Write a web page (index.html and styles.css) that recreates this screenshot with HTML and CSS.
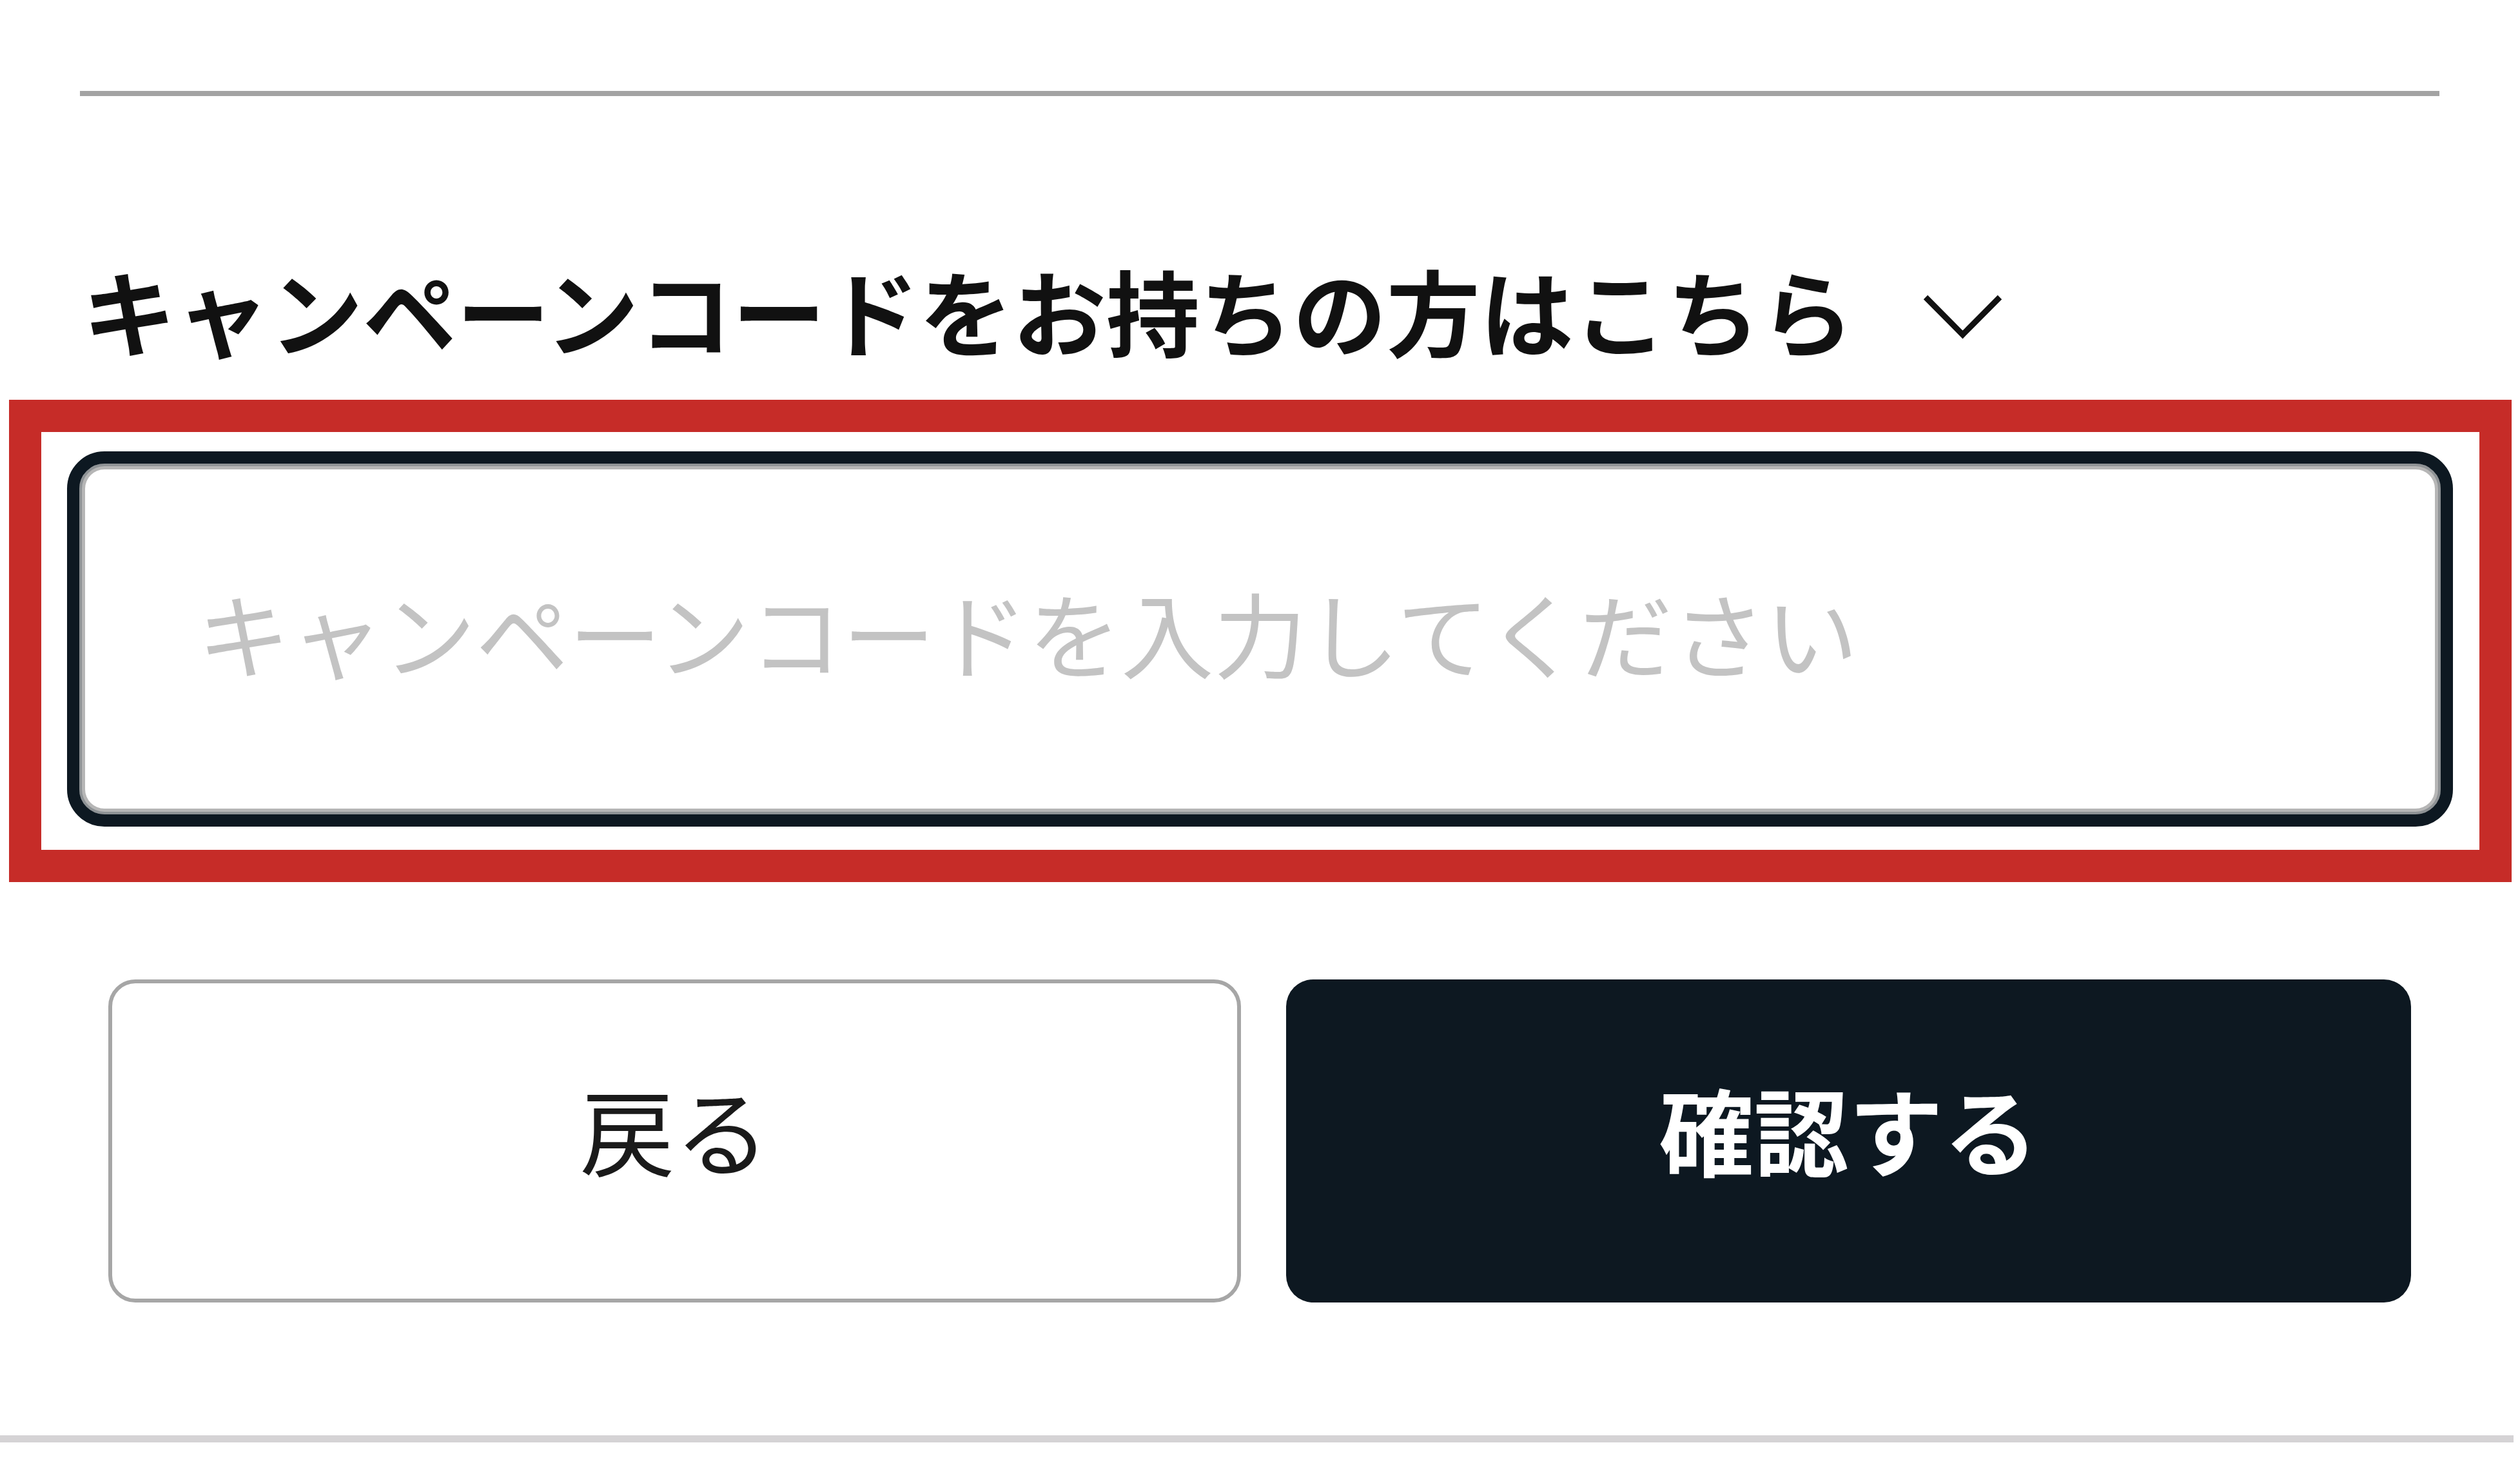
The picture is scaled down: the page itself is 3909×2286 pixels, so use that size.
FILE: index.html
```html
<!DOCTYPE html>
<html lang="ja">
  <head>
    <meta charset="UTF-8" />
    <meta name="viewport" content="width=device-width, initial-scale=1.0" />
    <title>キャンペーンコード</title>
    <link rel="stylesheet" href="styles.css">
  </head>

  <body>
    <div class="page">
      <div class="rule"></div>

      <button class="campaign-toggle" type="button">
        <span>キャンペーンコードをお持ちの方はこちら</span>
        <svg class="chevron" width="125" height="70" viewBox="0 0 125 70">
          <polyline points="5,5 62.5,63 120,5" />
        </svg>
      </button>

      <div class="code-box">
        <input
          class="code-input"
          type="text"
          name="campaignCode"
          placeholder="キャンペーンコードを入力してください"
        />
      </div>

      <div class="actions">
        <button class="btn btn-back" type="button">戻る</button>
        <button class="btn btn-confirm" type="submit">確認する</button>
      </div>

      <div class="rule rule-bottom"></div>
    </div>
  </body>
</html>
```

FILE: styles.css
```css
* {
  box-sizing: border-box;
}

body {
  margin: 0;
  background-color: #fff;
  color: #111;
  font-family: "Noto Sans CJK JP", "Noto Sans", sans-serif;
}

.page {
  padding-top: 141px;
}

.rule {
  height: 8px;
  margin: 0 125px 0 124px;
  background-color: #a3a3a3;
}

.campaign-toggle {
  display: flex;
  align-items: center;
  gap: 106px;
  margin: 231px 0 0 128px;
  padding: 0;
  border: none;
  background: none;
  color: #111;
  font-family: inherit;
  font-size: 145px;
  font-weight: 700;
  line-height: 200px;
  cursor: pointer;
}

.chevron {
  margin-top: 22px;
}

.chevron polyline {
  fill: none;
  stroke: #111;
  stroke-width: 9;
}

.code-box {
  width: 3882px;
  margin: 40px 0 0 14px;
  padding: 30px 41px 36px 40px;
  border: 50px solid #c62c28;
}

.code-input {
  display: block;
  width: 100%;
  height: 582px;
  padding: 0 0 24px 183px;
  border: 19px solid #0d1821;
  border-radius: 58px;
  box-shadow: inset 0 0 0 4px #8e9295, inset 0 0 0 9px #b6b6b6;
  background-color: #fff;
  color: #111;
  font-family: inherit;
  font-size: 144px;
  outline: none;
}

.code-input::placeholder {
  color: #c3c3c3;
}

.actions {
  display: flex;
  gap: 70px;
  width: 3572px;
  margin: 151px 0 0 168px;
}

.btn {
  flex: 1;
  height: 501px;
  padding: 0 0 42px;
  border-radius: 42px;
  font-family: inherit;
  font-size: 147px;
  cursor: pointer;
}

.btn-back {
  border: 6px solid #a6a6a6;
  background-color: #fff;
  color: #1a1a1a;
  font-weight: 400;
}

.btn-confirm {
  border: none;
  background-color: #0d1821;
  color: #fff;
  font-weight: 700;
}

.rule-bottom {
  height: 11px;
  margin: 206px 10px 0 0;
  background-color: #d5d3d5;
}
```
